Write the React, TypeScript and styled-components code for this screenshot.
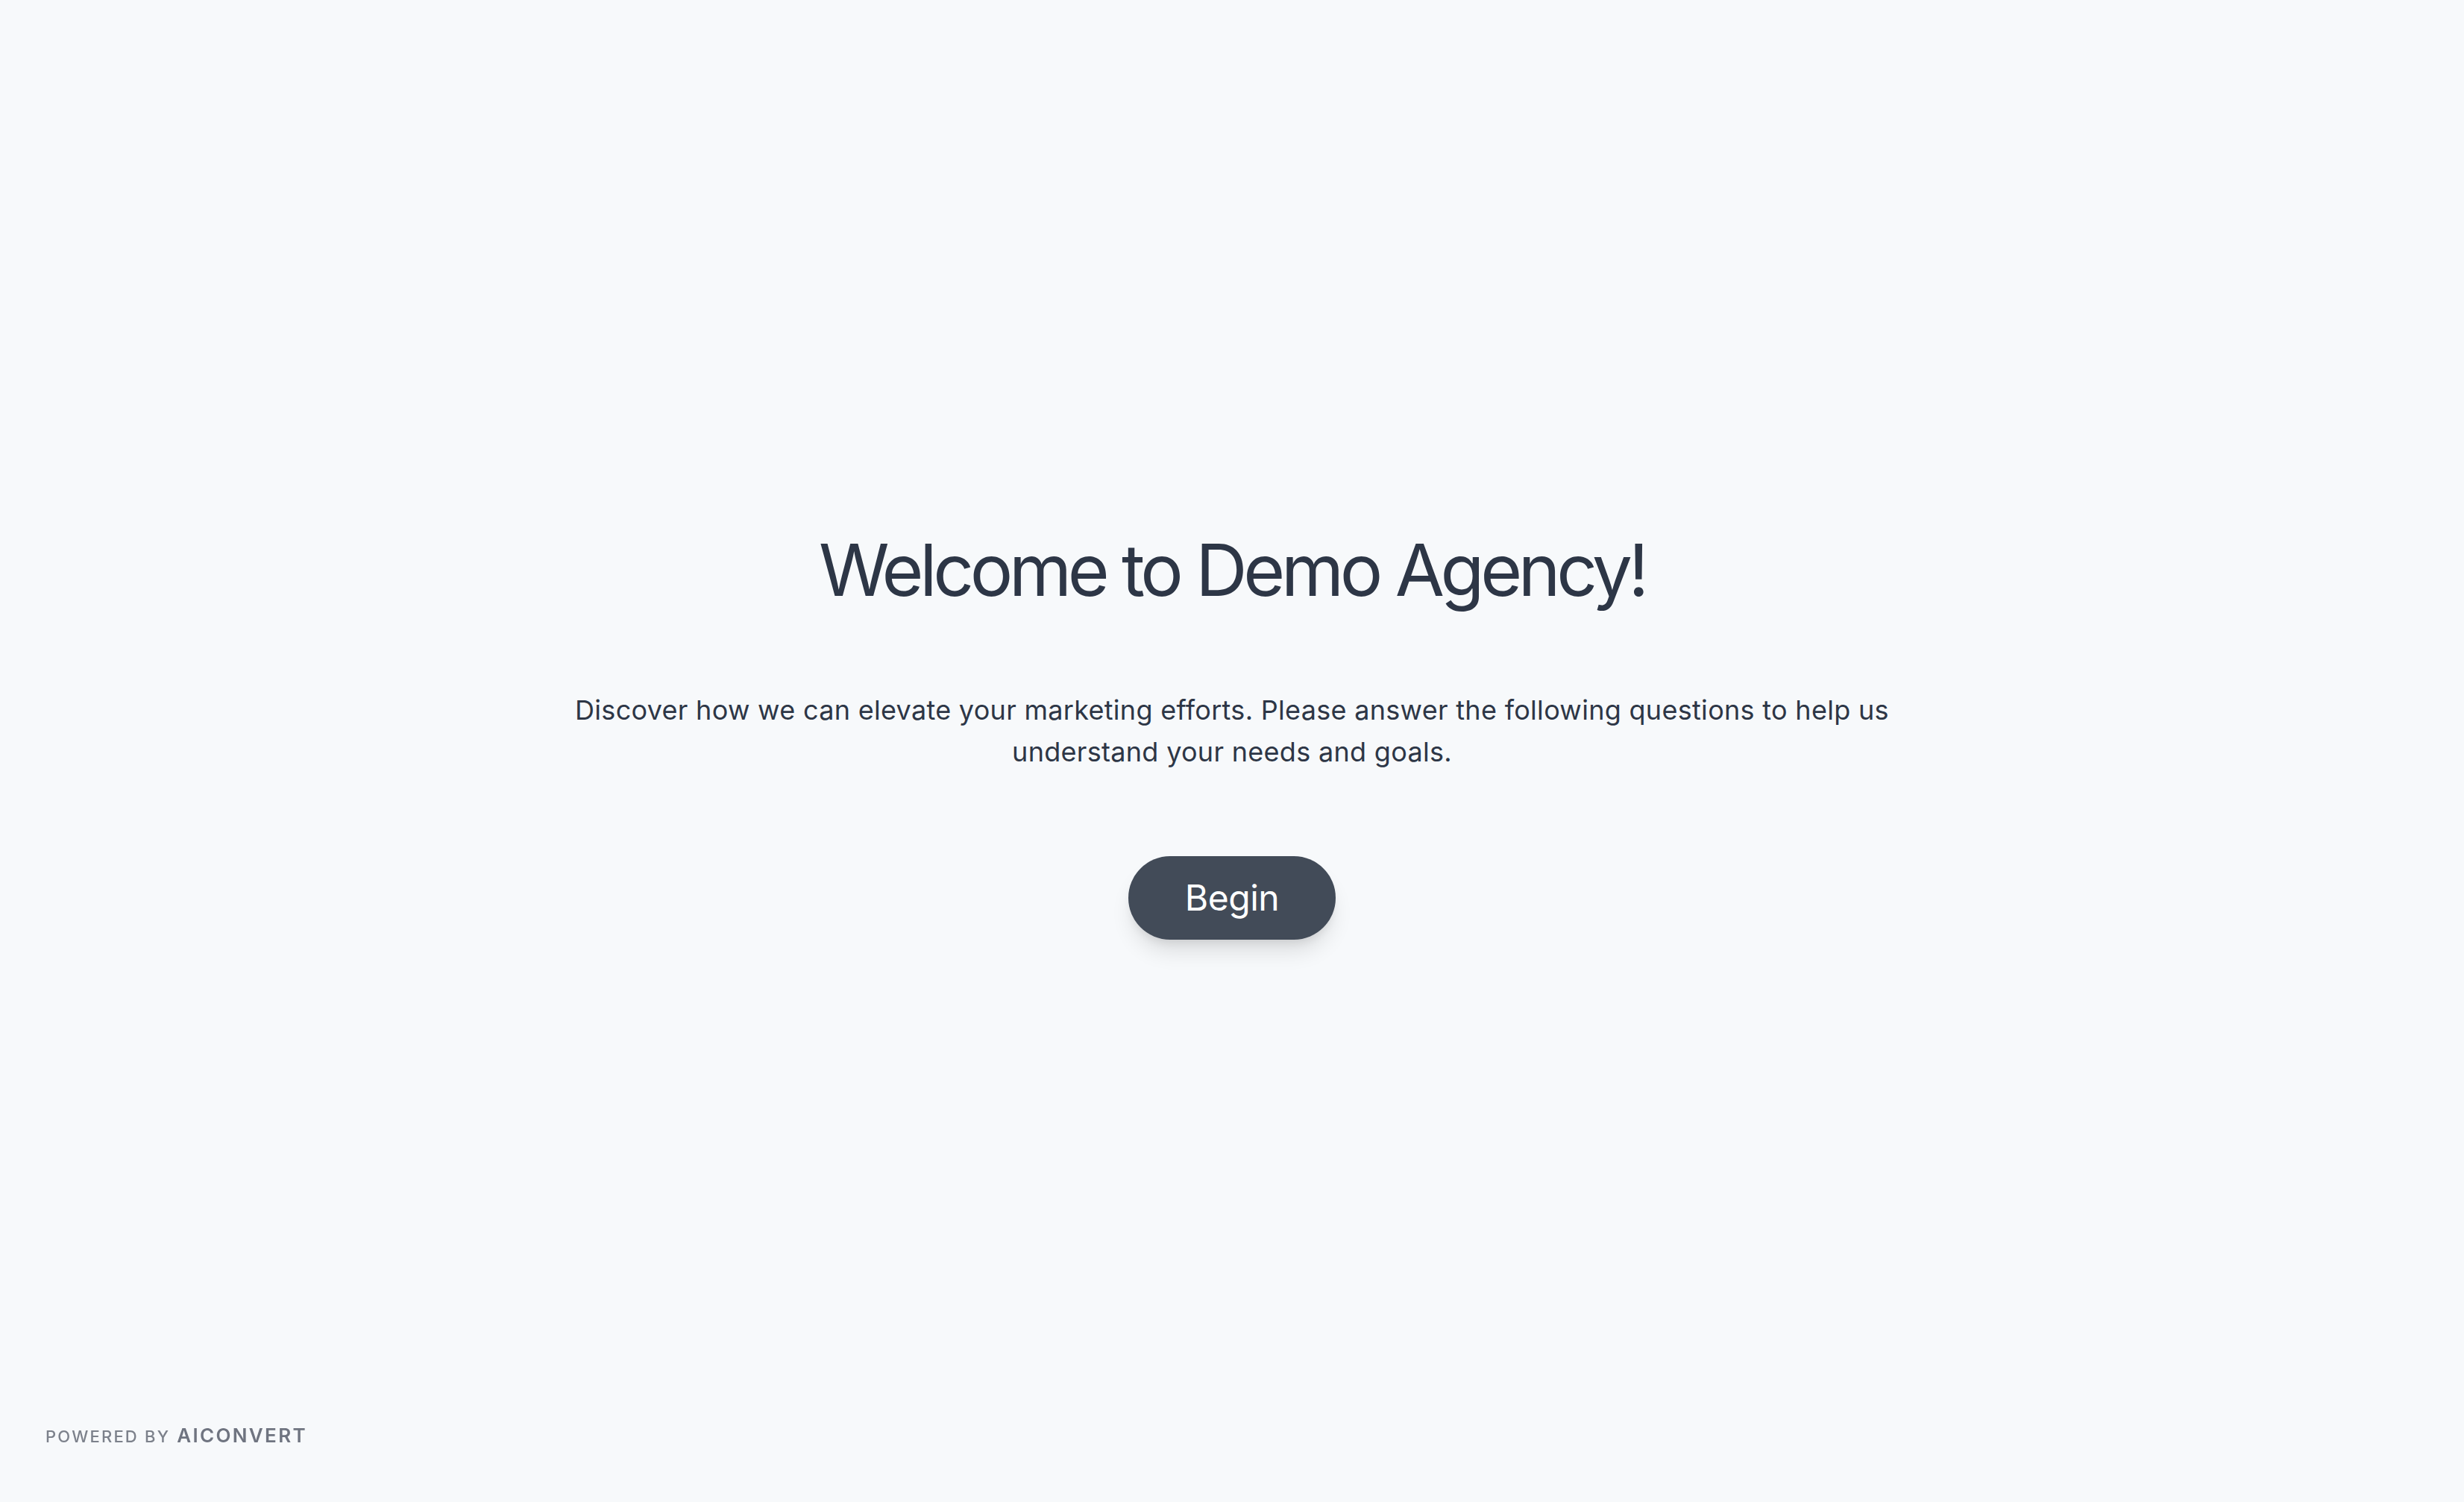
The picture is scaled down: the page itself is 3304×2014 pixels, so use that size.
import React from 'react';
import styled, { createGlobalStyle } from 'styled-components';

const GlobalStyle = createGlobalStyle`
	html, body {
		margin: 0;
		padding: 0;
		background: #f7f9fb;
	}
	body {
		font-family: Inter, 'Noto Sans', 'Liberation Sans', sans-serif;
		-webkit-font-smoothing: antialiased;
	}
`;

export default function App() {
	return (
		<>
			<GlobalStyle />
			<Page>
				<Intro>
					<Title>Welcome to Demo Agency!</Title>
					<Lead>
						Discover how we can elevate your marketing efforts. Please answer the following questions to help us
						understand your needs and goals.
					</Lead>
					<BeginButton type="button">Begin</BeginButton>
				</Intro>
			</Page>
			<PoweredBy>
				<span>Powered by</span>
				<Brand>AIConvert</Brand>
			</PoweredBy>
		</>
	);
}

const Page = styled.main`
	min-height: 100vh;
	box-sizing: border-box;
	display: flex;
	align-items: center;
	justify-content: center;
	padding-bottom: 39px;
`;

const Intro = styled.section`
	display: flex;
	flex-direction: column;
	align-items: center;
	text-align: center;
	max-width: 1800px;
`;

const Title = styled.h1`
	margin: 0 0 112px;
	font-size: 96px;
	line-height: 1;
	font-weight: 400;
	letter-spacing: -5.3px;
	color: #2d3646;
`;

const Lead = styled.p`
	margin: 0 0 112px;
	font-size: 36px;
	line-height: 56px;
	letter-spacing: 0.3px;
	color: #2d3646;
`;

const BeginButton = styled.button`
	border: none;
	outline: none;
	cursor: pointer;
	padding: 24px 76px;
	border-radius: 999px;
	background: #424b58;
	color: #fff;
	font-family: inherit;
	font-size: 48px;
	line-height: 64px;
	letter-spacing: -0.5px;
	box-shadow: 0 20px 30px -6px rgba(0, 0, 0, 0.12), 0 8px 12px -4px rgba(0, 0, 0, 0.08);
`;

const PoweredBy = styled.footer`
	position: fixed;
	left: 61px;
	bottom: 74px;
	display: flex;
	align-items: baseline;
	gap: 9px;
	font-size: 22px;
	font-weight: 500;
	letter-spacing: 0.1em;
	text-transform: uppercase;
	color: #7c818b;
`;

const Brand = styled.span`
	font-size: 26px;
	font-weight: 600;
	letter-spacing: 0.09em;
	color: #6f7480;
`;
